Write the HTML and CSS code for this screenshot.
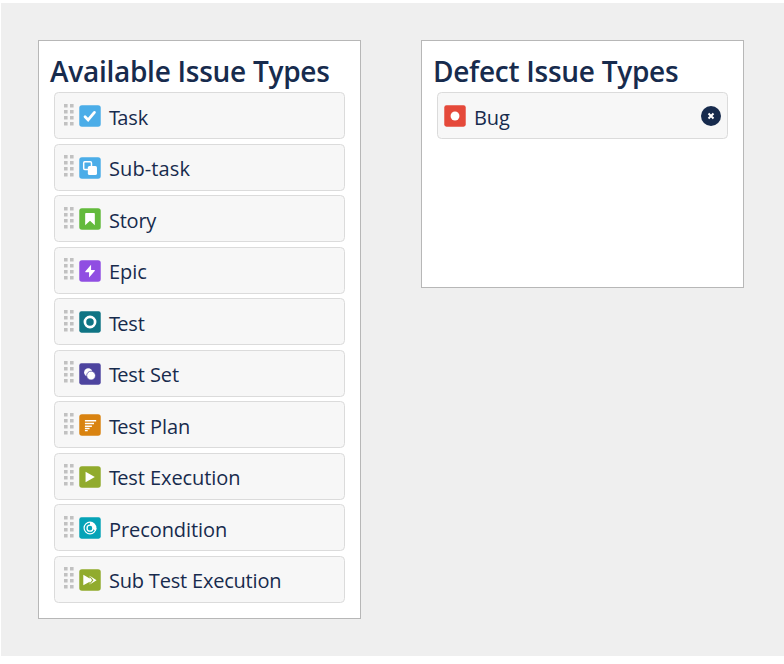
FILE: index.html
```
<!DOCTYPE html>
<html lang="en">
<head>
<meta charset="utf-8">
<title>Issue Types</title>
<link rel="stylesheet" href="styles.css">
</head>
<body>
<svg class="defs" width="0" height="0">
  <symbol id="grip" viewBox="0 0 10 22"><g fill="#c1c1c1"><path d="M0 0h3.600v3.600H0zM6 0h3.600v3.600H6zM0 6h3.600v3.600H0zM6 6h3.600v3.600H6zM0 12h3.600v3.600H0zM6 12h3.600v3.600H6zM0 18h3.600v3.600H0zM6 18h3.600v3.600H6z"/></g></symbol>
</svg>
<main class="board">
  <section class="panel">
    <h2 class="title">Available Issue Types</h2>
    <ul class="list">
      <li class="item"><svg class="grip"><use href="#grip"/></svg><svg class="icon" viewBox="-.2 -.2 16.4 16.4"><rect width="16" height="16" rx="2" fill="#4bade8"/><path d="M4.300 8.600l2.300 2.300 4.700-5.600" fill="none" stroke="#fff" stroke-width="2.100" stroke-linecap="round"/></svg><span class="name name-t">Task</span></li>
      <li class="item"><svg class="grip"><use href="#grip"/></svg><svg class="icon" viewBox="-.2 -.2 16.4 16.4"><rect width="16" height="16" rx="2" fill="#4bade8"/><rect x="3.300" y="3.400" width="5.800" height="5.800" rx=".8" fill="none" stroke="#fff" stroke-width="1.100"/><rect x="6.400" y="6.500" width="6.800" height="6.800" rx="1.200" fill="#fff"/></svg><span class="name name-sub">Sub-task</span></li>
      <li class="item"><svg class="grip"><use href="#grip"/></svg><svg class="icon" viewBox="-.2 -.2 16.4 16.4"><rect width="16" height="16" rx="2" fill="#63ba3c"/><path d="M5 3.500h6a.6.6 0 0 1 .6.6v8.500L8 9.300l-3.600 3.300V4.100a.6.6 0 0 1 .6-.6z" fill="#fff"/></svg><span class="name name-story">Story</span></li>
      <li class="item"><svg class="grip"><use href="#grip"/></svg><svg class="icon" viewBox="-.2 -.2 16.4 16.4"><rect width="16" height="16" rx="2" fill="#904ee2"/><path d="M8.800 3.400L4.600 8.100c-.3.4-.1.8.4.8h2.300v3.900l4.200-4.800c.3-.4.1-.8-.4-.8H8.800z" fill="#fff"/></svg><span class="name">Epic</span></li>
      <li class="item"><svg class="grip"><use href="#grip"/></svg><svg class="icon" viewBox="-.2 -.2 16.4 16.4"><rect width="16" height="16" rx="1.600" fill="#0f7484"/><circle cx="8" cy="8" r="3.800" fill="none" stroke="#fff" stroke-width="2"/></svg><span class="name name-t">Test</span></li>
      <li class="item"><svg class="grip"><use href="#grip"/></svg><svg class="icon" viewBox="-.2 -.2 16.4 16.4"><rect width="16" height="16" rx="1.600" fill="#4d449f"/><circle cx="6.700" cy="6.800" r="3.100" fill="#fff"/><circle cx="8.800" cy="9.200" r="3.300" fill="#fff" stroke="#4d449f" stroke-width=".55"/></svg><span class="name name-t">Test Set</span></li>
      <li class="item"><svg class="grip"><use href="#grip"/></svg><svg class="icon" viewBox="-.2 -.2 16.4 16.4"><rect width="16" height="16" rx="2" fill="#d98310"/><path d="M4.200 4.200h8.400v1.200H4.200zM4.200 6.300h6.800v1.200H4.200zM4.200 8.300h5.200v1.200H4.200zM4.200 10.100h3.500v1.100H4.200zM4.200 11.800h2.100v.9H4.200z" fill="#fff"/></svg><span class="name name-t">Test Plan</span></li>
      <li class="item"><svg class="grip"><use href="#grip"/></svg><svg class="icon" viewBox="-.2 -.2 16.4 16.4"><rect width="16" height="16" rx="2" fill="#91ab2d"/><path d="M4.700 4.100v7.800L11.600 8z" fill="#fff"/></svg><span class="name name-t">Test Execution</span></li>
      <li class="item"><svg class="grip"><use href="#grip"/></svg><svg class="icon" viewBox="-.2 -.2 16.4 16.4"><rect width="16" height="16" rx="1.600" fill="#06a3b7"/><path d="M8 3.600a4.400 4.400 0 1 0 4.400 4.400" fill="none" stroke="#fff" stroke-width=".9"/><path d="M8 3.200A4.800 4.800 0 0 1 12.800 8c0 .8-.2 1.600-.6 2.300L10.200 8.800c.5-1.800-.6-3-2.200-3z" fill="#fff"/><circle cx="8" cy="8.100" r="2.200" fill="none" stroke="#fff" stroke-width="1"/></svg><span class="name">Precondition</span></li>
      <li class="item"><svg class="grip"><use href="#grip"/></svg><svg class="icon" viewBox="-.2 -.2 16.4 16.4"><rect width="16" height="16" rx="2" fill="#91ab2d"/><path d="M3 4v8l4.800-2.700v2.100L12.900 8.100 7.800 4.900v2z" fill="#fff"/><path d="M7.900 5.400l2.200 2.700-2.200 2.700" fill="none" stroke="#91ab2d" stroke-width=".8"/></svg><span class="name name-long">Sub Test Execution</span></li>
    </ul>
  </section>
  <section class="panel panel-defect">
    <h2 class="title">Defect Issue Types</h2>
    <ul class="list">
      <li class="item item-fixed"><svg class="icon" viewBox="-.2 -.2 16.4 16.4"><rect width="16" height="16" rx="1.600" fill="#e5493a"/><circle cx="8" cy="8" r="3.300" fill="#fff"/></svg><span class="name">Bug</span><svg class="remove" viewBox="0 0 20 20"><circle cx="10" cy="10" r="10" fill="#172b4d"/><path d="M7.500 7.500l5 5M12.500 7.500l-5 5" stroke="#fff" stroke-width="2"/></svg></li>
    </ul>
  </section>
</main>
</body>
</html>
```
FILE: styles.css
```
* { box-sizing: border-box; }
body {
  margin: 0;
  background: #fff;
  color: #172b4d;
  font-family: "Segoe UI", "Open Sans", "Noto Sans", sans-serif;
}
.defs { display: block; }
.board {
  display: flex;
  align-items: flex-start;
  gap: 60px;
  height: 653px;
  margin: 3px 0 0 1px;
  padding: 37px;
  background: #efefef;
}
.panel {
  flex: none;
  width: 323px;
  height: 579px;
  padding: 11px 15px 0;
  border: 1px solid #b7b7b7;
  background: #fff;
}
.panel-defect { height: 248px; }
.title {
  margin: 0 0 2px -4px;
  height: 38px;
  font-size: 28px;
  font-weight: 600;
  letter-spacing: -0.27px;
  line-height: 38px;
  white-space: nowrap;
}
.list {
  display: flex;
  flex-direction: column;
  gap: 4.5px;
  margin: 0;
  padding: 0;
  list-style: none;
}
.item {
  display: flex;
  align-items: center;
  width: 291px;
  height: 47px;
  padding: 0 6px 0 9px;
  border: 1px solid #dbdbdb;
  border-radius: 4.5px;
  background: #f7f7f7;
}
.item-fixed { padding-left: 6px; }
.grip {
  width: 10px;
  height: 22px;
  margin-right: 5px;
  margin-bottom: 1.6px;
}
.icon {
  width: 22px;
  height: 22px;
  margin-top: 1px;
  margin-right: 8px;
}
.name {
  margin-top: 4px;
  font-size: 20px;
  font-weight: 400;
  letter-spacing: -0.08px;
  line-height: 28px;
  white-space: nowrap;
}
.name-t::first-letter { letter-spacing: -2.8px; }
.name-sub { letter-spacing: 0.1px; }
.name-story { letter-spacing: -0.25px; }
.name-long { letter-spacing: -0.2px; }
.remove {
  width: 20px;
  height: 20px;
  margin-left: auto;
}
```
